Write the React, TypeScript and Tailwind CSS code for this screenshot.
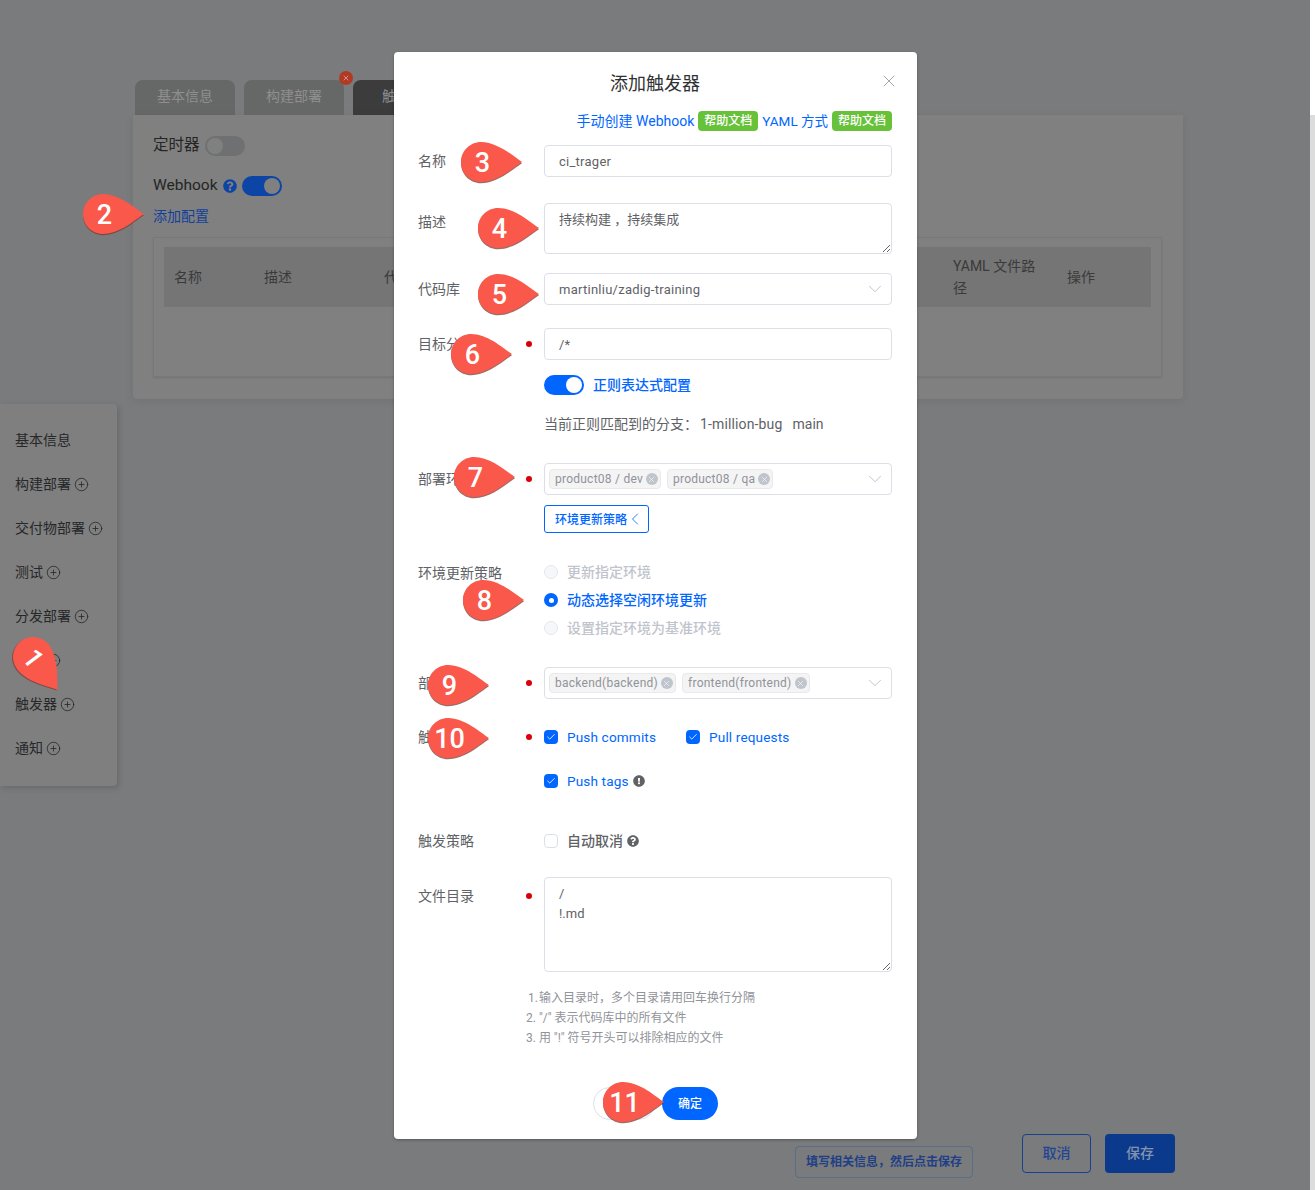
import { ChevronDown, ChevronLeft, CirclePlus, Check, X } from 'lucide-react'
import { FaExclamationCircle, FaQuestionCircle } from 'react-icons/fa'
import type { ReactNode } from 'react'

const sideItems = [
  { label: '基本信息', plus: false },
  { label: '构建部署', plus: true },
  { label: '交付物部署', plus: true },
  { label: '测试', plus: true },
  { label: '分发部署', plus: true },
  { label: '扩展', plus: true },
  { label: '触发器', plus: true },
  { label: '通知', plus: true },
]

// Numbered callout drawn over the screenshot; the tip points right unless rotated.
function Pin({ n, className }: { n: number; className: string }) {
  return (
    <div className={`absolute z-20 h-[42px] w-[63px] ${className}`}>
      <svg className="absolute inset-0 overflow-visible" width="63" height="42" viewBox="0 0 63 42">
        <path
          d="M62 21C54 26 38 41 21 41C10 41 1 32 1 21C1 10 10 1 21 1C38 1 54 16 62 21Z"
          fill="#7d3a33"
          transform="translate(0 1.2)"
          opacity="0.75"
        />
        <path d="M62 21C54 26 38 41 21 41C10 41 1 32 1 21C1 10 10 1 21 1C38 1 54 16 62 21Z" fill="#f9584b" />
      </svg>
      <span className="absolute left-0 top-[1px] flex h-[42px] w-[45px] items-center justify-center [font-family:Roboto,sans-serif] text-[27px] font-medium text-white">
        {n}
      </span>
    </div>
  )
}

function Row({
  label,
  required,
  tall,
  className,
  children,
}: {
  label: string
  required?: boolean
  tall?: boolean
  className: string
  children: ReactNode
}) {
  return (
    <div className={`flex items-start ${className}`}>
      <div className={`flex w-[108px] shrink-0 items-center whitespace-nowrap text-[#606266] ${tall ? 'h-[38px]' : 'h-[32px]'}`}>
        {label}
      </div>
      <div className={`flex w-[18px] shrink-0 items-center ${tall ? 'h-[38px]' : 'h-[32px]'}`}>
        {required && <span className="h-[6px] w-[6px] rounded-full bg-[#d9000c]" />}
      </div>
      <div className="w-[348px]">{children}</div>
    </div>
  )
}

function TextInput({ value }: { value: string }) {
  return (
    <input
      readOnly
      value={value}
      className="block h-[32px] w-full rounded border border-[#dcdfe6] px-[14px] text-[13px] tracking-[0.02em] text-[#606266] outline-none"
    />
  )
}

function TextArea({ value, height }: { value: string; height: string }) {
  return (
    <textarea
      readOnly
      value={value}
      className={`block w-full resize-y rounded border border-[#dcdfe6] px-[14px] pb-[4px] pt-[6px] text-[13px] leading-[20px] text-[#606266] outline-none ${height}`}
    />
  )
}

function Tag({ text, wide }: { text: string; wide?: boolean }) {
  return (
    <span
      className={`flex h-[20px] items-center gap-[3px] rounded border border-[#e9e9eb] bg-[#f4f4f5] pl-[5px] pr-[2px] text-[12px] text-[#909399] ${wide ? 'tracking-[0.02em]' : ''}`}
    >
      {text}
      <span className="flex h-[12px] w-[12px] items-center justify-center rounded-full bg-[#c0c4cc]">
        <X size={9} strokeWidth={1.5} color="#ffffff" />
      </span>
    </span>
  )
}

function Select({ children }: { children: ReactNode }) {
  return (
    <div className="flex h-[32px] items-center justify-between rounded border border-[#dcdfe6] pr-[5px] text-[13px] tracking-[0.02em] text-[#606266]">
      {children}
      <ChevronDown size={22} strokeWidth={0.9} color="#b4b8c0" />
    </div>
  )
}

function Radio({ label, active }: { label: string; active?: boolean }) {
  return (
    <div className={`flex h-[28px] items-center gap-[9px] font-medium ${active ? 'text-[#0066ff]' : 'text-[#c0c4cc]'}`}>
      {active ? (
        <span className="flex h-[14px] w-[14px] items-center justify-center rounded-full bg-[#0066ff]">
          <span className="h-[5px] w-[5px] rounded-full bg-white" />
        </span>
      ) : (
        <span className="h-[14px] w-[14px] rounded-full border border-[#e4e7ed] bg-[#f5f7fa]" />
      )}
      {label}
    </div>
  )
}

function CheckItem({ label, children }: { label: string; children?: ReactNode }) {
  return (
    <div className="flex h-[28px] items-center gap-[9px] text-[13.6px] tracking-[0.01em] text-[#0066ff]">
      <span className="flex h-[14px] w-[14px] items-center justify-center rounded-sm bg-[#0066ff]">
        <Check size={10} strokeWidth={2} color="#ffffff" />
      </span>
      <span className="flex items-center gap-[4px] pt-[1px]">
        {label}
        {children}
      </span>
    </div>
  )
}

function HelpTag() {
  return (
    <span className="flex h-[20px] w-[60px] items-center justify-center rounded bg-[#67c23a] text-[12px] font-medium text-white">
      帮助文档
    </span>
  )
}

function PageBehind() {
  return (
    <div className="flex h-full flex-col">
      <div className="ml-[135px] mt-[80px] flex h-[35px] gap-[9px] text-[14px]">
        <div className="flex w-[100px] items-center justify-center rounded-t-lg bg-[#666767] pb-[3px] text-[#8f8f8f]">基本信息</div>
        <div className="relative flex w-[100px] items-center justify-center rounded-t-lg bg-[#666767] pb-[3px] text-[#8f8f8f]">
          构建部署
          <span className="absolute -right-[9px] -top-[9px] flex h-[14px] w-[14px] items-center justify-center rounded-full bg-[#b23a24]">
            <X size={8} strokeWidth={2} color="#d8c0bb" />
          </span>
        </div>
        <div className="flex w-[100px] items-center justify-center rounded-t-lg bg-[#3c3c3d] pb-[3px] text-[#8f8f8f]">触发器</div>
      </div>

      <div className="ml-[133px] h-[284px] w-[1050px] rounded-b bg-[#808080] px-[20px] pt-[21px] shadow-[0_2px_8px_rgba(0,0,0,0.08)]">
        <div className="flex h-[20px] items-center gap-[5px] text-[15.5px] text-[#252525]">
          定时器
          <span className="flex h-[20px] w-[40px] items-center rounded-full bg-[#6e7072] pl-[2px]">
            <span className="h-[16px] w-[16px] rounded-full bg-[#808080]" />
          </span>
        </div>
        <div className="mt-[20px] flex h-[20px] items-center text-[15.5px] text-[#252525]">
          Webhook
          <FaQuestionCircle className="ml-[5px] text-[#0c45a5]" size={14} />
          <span className="ml-[5px] flex h-[20px] w-[40px] items-center justify-end rounded-full bg-[#0c45a5] pr-[2px]">
            <span className="h-[16px] w-[16px] rounded-full bg-[#808080]" />
          </span>
        </div>
        <div className="mt-[10px] text-[14px] leading-[20px] text-[#13409a]">添加配置</div>
        <div className="mt-[11px] h-[140px] w-[1009px] border border-[#787878] px-[10px] pt-[9px] shadow-[0_1px_2px_rgba(0,0,0,0.1)]">
          <div className="flex h-[60px] items-center bg-[#757575] text-[14px] text-[#3a3a3a]">
            <span className="ml-[10px] w-[90px]">名称</span>
            <span className="w-[120px]">描述</span>
            <span className="w-[569px]">代码库</span>
            <span className="mr-[30px] w-[84px] leading-[22px]">YAML 文件路径</span>
            <span>操作</span>
          </div>
        </div>
      </div>

      <nav className="mt-[5px] w-[117px] rounded-r bg-[#7f7f7f] pb-[16px] pl-[15px] pt-[14px] shadow-[2px_2px_6px_rgba(0,0,0,0.15)]">
        {sideItems.map((item) => (
          <div key={item.label} className="flex h-[44px] items-center gap-[3px] whitespace-nowrap text-[14px] text-[#262728]">
            {item.label}
            {item.plus && <CirclePlus size={15} strokeWidth={1.3} />}
          </div>
        ))}
      </nav>

      <div className="mt-auto flex items-start justify-end pb-[12px] pr-[135px]">
        <div className="mt-[12px] flex h-[32px] w-[178px] items-center justify-center rounded border border-[#5b6c88] text-[12px] font-semibold text-[#1f3f86]">
          填写相关信息，然后点击保存
        </div>
        <div className="ml-[49px] flex h-[39px] w-[69px] items-center justify-center rounded border border-[#17408f] text-[14px] font-medium text-[#1f4594]">
          取消
        </div>
        <div className="ml-[14px] flex h-[39px] w-[70px] items-center justify-center rounded bg-[#0b3a8c] text-[14px] font-medium text-[#8493ad]">
          保存
        </div>
      </div>
    </div>
  )
}

function TriggerModal() {
  return (
    <div className="absolute left-[394px] top-[52px] z-10 h-[1087px] w-[523px] rounded bg-white pl-[24px] pr-[25px] text-[14px] shadow-[0_1px_3px_rgba(0,0,0,0.3)]">
      <div className="relative pt-[20px]">
        <div className="text-center text-[18px] leading-[24px] text-[#303133]">添加触发器</div>
        <X className="absolute right-[-7px] top-[19px]" size={20} strokeWidth={1} color="#909399" />
      </div>
      <div className="mt-[15px] flex h-[20px] items-center justify-end gap-[4px] text-[#0066ff]">
        <span>手动创建 Webhook</span>
        <HelpTag />
        <span className="text-[13.5px]">YAML 方式</span>
        <HelpTag />
      </div>

      <Row label="名称" className="mt-[14px]">
        <TextInput value="ci_trager" />
      </Row>
      <Row label="描述" tall className="mt-[26px]">
        <TextArea value="持续构建 ，持续集成" height="h-[51px]" />
      </Row>
      <Row label="代码库" className="mt-[19px]">
        <Select>
          <span className="pl-[14px] pt-[1px]">martinliu/zadig-training</span>
        </Select>
      </Row>
      <Row label="目标分支" required className="mt-[23px]">
        <TextInput value="/*" />
        <div className="mt-[15px] flex h-[20px] items-center gap-[9px] font-medium text-[#0066ff]">
          <span className="flex h-[20px] w-[40px] items-center justify-end rounded-full bg-[#0066ff] pr-[2px]">
            <span className="h-[16px] w-[16px] rounded-full bg-white" />
          </span>
          正则表达式配置
        </div>
        <div className="mt-[19px] flex h-[20px] items-center text-[#606266]">
          当前正则匹配到的分支：
          <span className="ml-[2px] tracking-[0.01em]">1-million-bug</span>
          <span className="ml-[10px]">main</span>
        </div>
      </Row>
      <Row label="部署环境" required className="mt-[29px]">
        <Select>
          <span className="flex gap-[6px] pl-[4px]">
            <Tag text="product08 / dev" wide />
            <Tag text="product08 / qa" wide />
          </span>
        </Select>
        <div className="mt-[10px] flex h-[28px] w-[105px] items-center rounded-[3px] border border-[#0066ff] pl-[10px] text-[12px] font-medium text-[#0066ff]">
          <span className="pt-[1px]">环境更新策略</span>
          <ChevronLeft className="-ml-[2px]" size={20} strokeWidth={1} />
        </div>
      </Row>
      <div className="mt-[25px] flex items-start">
        <div className="flex h-[30px] w-[126px] shrink-0 items-center text-[#606266]">环境更新策略</div>
        <div>
          <Radio label="更新指定环境" />
          <Radio label="动态选择空闲环境更新" active />
          <Radio label="设置指定环境为基准环境" />
        </div>
      </div>
      <Row label="部署服务" required className="mt-[25px]">
        <Select>
          <span className="flex gap-[6px] pl-[4px]">
            <Tag text="backend(backend)" />
            <Tag text="frontend(frontend)" />
          </span>
        </Select>
      </Row>
      <div className="mt-[22px] flex items-start">
        <div className="flex h-[32px] w-[108px] shrink-0 items-center text-[#606266]">触发事件</div>
        <div className="flex h-[32px] w-[18px] shrink-0 items-center">
          <span className="h-[6px] w-[6px] rounded-full bg-[#d9000c]" />
        </div>
        <div className="pt-[2px]">
          <div className="flex gap-[30px]">
            <CheckItem label="Push commits" />
            <CheckItem label="Pull requests" />
          </div>
          <div className="mt-[16px]">
            <CheckItem label="Push tags">
              <FaExclamationCircle size={12} color="#606266" />
            </CheckItem>
          </div>
        </div>
      </div>
      <div className="mt-[32px] flex h-[28px] items-center">
        <span className="w-[126px] text-[#606266]">触发策略</span>
        <span className="h-[14px] w-[14px] rounded-sm border border-[#dcdfe6]" />
        <span className="ml-[9px] flex items-center gap-[4px] font-medium text-[#606266]">
          自动取消
          <FaQuestionCircle size={12} />
        </span>
      </div>
      <Row label="文件目录" required tall className="mt-[22px]">
        <TextArea value={'/\n!.md'} height="h-[95px]" />
      </Row>
      <div className="ml-[108px] mt-[16px] text-[12px] leading-[20px] text-[#909399]">
        <div className="flex pl-[2px]">
          <span className="mr-[1px]">1.</span>输入目录时，多个目录请用回车换行分隔
        </div>
        <div>2. "/" 表示代码库中的所有文件</div>
        <div>3. 用 "!" 符号开头可以排除相应的文件</div>
      </div>
      <div className="ml-[175px] mt-[39px] flex h-[33px] items-center">
        <span className="flex h-[33px] w-[62px] items-center justify-center rounded-full border border-[#dcdfe6] text-[12px] text-[#606266]">
          取消
        </span>
        <span className="ml-[7px] flex h-[33px] w-[56px] items-center justify-center rounded-full bg-[#0066ff] text-[12px] font-medium text-white">
          确定
        </span>
      </div>
    </div>
  )
}

export default function App() {
  return (
    <div className="flex h-[1190px] w-[1315px] overflow-hidden [font-family:Roboto,'Noto_Sans_CJK_SC',sans-serif]">
      <div className="relative h-full w-[1310px] bg-[#7a7b7c]">
        <PageBehind />
        <TriggerModal />
        <Pin n={1} className="left-[12px] top-[636px] rotate-[53deg] origin-[21px_21px]" />
        <Pin n={2} className="left-[82px] top-[193px]" />
        <Pin n={3} className="left-[460px] top-[141px]" />
        <Pin n={4} className="left-[477px] top-[207px]" />
        <Pin n={5} className="left-[477px] top-[273px]" />
        <Pin n={6} className="left-[450px] top-[333px]" />
        <Pin n={7} className="left-[453px] top-[456px]" />
        <Pin n={8} className="left-[462px] top-[579px]" />
        <Pin n={9} className="left-[427px] top-[664px]" />
        <Pin n={10} className="left-[427px] top-[717px]" />
        <Pin n={11} className="left-[602px] top-[1081px]" />
      </div>
      <div className="flex w-[5px] flex-col">
        <div className="h-[115px] bg-white" />
        <div className="flex-1 bg-[#dcdcdc]" />
      </div>
    </div>
  )
}
